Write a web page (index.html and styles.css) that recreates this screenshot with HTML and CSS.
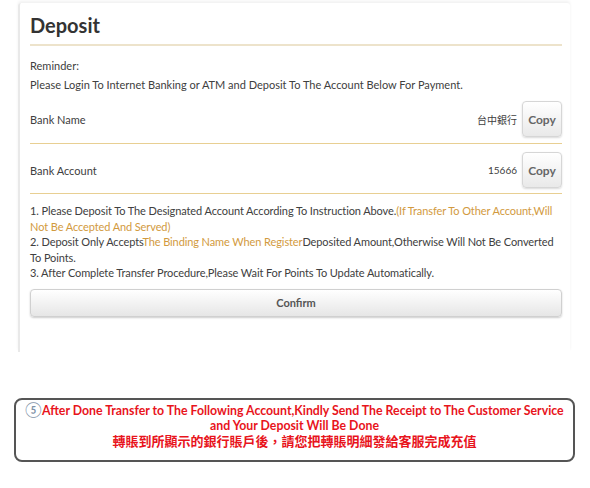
FILE: index.html
```html
<!DOCTYPE html>
<html lang="en">
<head>
    <meta charset="UTF-8">
    <meta name="viewport" content="width=device-width, initial-scale=1.0">
    <title>Deposit</title>
    <link rel="stylesheet" href="styles.css">
</head>
<body>
    <div class="panel">
        <h1 class="panel-title">Deposit</h1>

        <div class="reminder">
            <p>Reminder:</p>
            <p>Please Login To Internet Banking or ATM and Deposit To The Account Below For Payment.</p>
        </div>

        <div class="info-row">
            <span class="info-label">Bank Name</span>
            <div class="info-value">
                <span>台中銀行</span>
                <button class="copy-btn">Copy</button>
            </div>
        </div>
        <div class="info-row">
            <span class="info-label">Bank Account</span>
            <div class="info-value">
                <span>15666</span>
                <button class="copy-btn">Copy</button>
            </div>
        </div>

        <div class="notes">
            <p>1. Please Deposit To The Designated Account According To Instruction Above.<span class="hl">(If Transfer To Other Account,Will Not Be Accepted And Served)</span></p>
            <p>2. Deposit Only Accepts<span class="hl">The Binding Name When Register</span>Deposited Amount,Otherwise Will Not Be Converted To Points.</p>
            <p>3. After Complete Transfer Procedure,Please Wait For Points To Update Automatically.</p>
        </div>

        <button class="confirm-btn">Confirm</button>
    </div>

    <div class="notice">
        <p><span class="num">⑤</span>After Done Transfer to The Following Account,Kindly Send The Receipt to The Customer Service</p>
        <p>and Your Deposit Will Be Done</p>
        <p class="zh">轉賬到所顯示的銀行賬戶後，請您把轉賬明細發給客服完成充值</p>
    </div>
</body>
</html>
```

FILE: styles.css
```css
body {
    margin: 0;
    font-family: Lato, 'Noto Sans CJK TC', sans-serif;
    color: #404040;
    background-color: #fff;
}
p {
    margin: 0;
}
.panel {
    width: 532px;
    height: 349px;
    margin: 3px 0 0 18px;
    padding: 0 8px 0 10px;
    border-left: 2px solid #e9e9e9;
    box-shadow: 0 -2px 3px rgba(0, 0, 0, 0.06);
    border-radius: 3px 3px 0 0;
}
.panel-title {
    margin: 0;
    padding: 9px 0 6px;
    font-size: 20px;
    line-height: 26px;
    color: #333;
    border-bottom: 2px solid #ede3cb;
}
.reminder {
    padding-top: 10px;
    font-size: 11px;
    line-height: 19px;
}
.info-row {
    display: flex;
    align-items: center;
    justify-content: space-between;
    padding: 7px 0 6px;
    border-bottom: 1px solid #e8cf92;
    font-size: 11px;
}
.info-row + .info-row {
    padding: 8px 0 5px;
}
.info-value {
    display: flex;
    align-items: center;
    gap: 5px;
    font-size: 10px;
}
.copy-btn {
    width: 40px;
    height: 36px;
    padding: 0;
    font-family: Lato, sans-serif;
    font-size: 12px;
    font-weight: bold;
    color: #666;
    background: linear-gradient(#fff, #e9e9e9);
    border: 1px solid #d6d6d6;
    border-radius: 4px;
    box-shadow: 0 1px 2px rgba(0, 0, 0, 0.15);
}
.notes {
    padding-top: 9px;
    font-size: 11px;
    line-height: 15.5px;
    letter-spacing: -0.1px;
}
.hl {
    color: #d29a3e;
}
.confirm-btn {
    display: block;
    width: 100%;
    height: 28px;
    margin-top: 8px;
    font-family: Lato, sans-serif;
    font-size: 11px;
    font-weight: bold;
    color: #555;
    background: linear-gradient(#fff, #e6e6e6);
    border: 1px solid #d0d0d0;
    border-radius: 4px;
    box-shadow: 0 1px 2px rgba(0, 0, 0, 0.2);
}
.notice {
    margin: 46px 0 0 14px;
    width: 557px;
    height: 58px;
    padding-top: 2px;
    border: 2px solid #555;
    border-radius: 8px;
    text-align: center;
    color: #e8141c;
    font-weight: bold;
    font-size: 12.3px;
    line-height: 15px;
}
.notice .num {
    color: #7f93a8;
    font-weight: normal;
    font-size: 15px;
}
.notice .zh {
    font-size: 13px;
    line-height: 17px;
}
```
